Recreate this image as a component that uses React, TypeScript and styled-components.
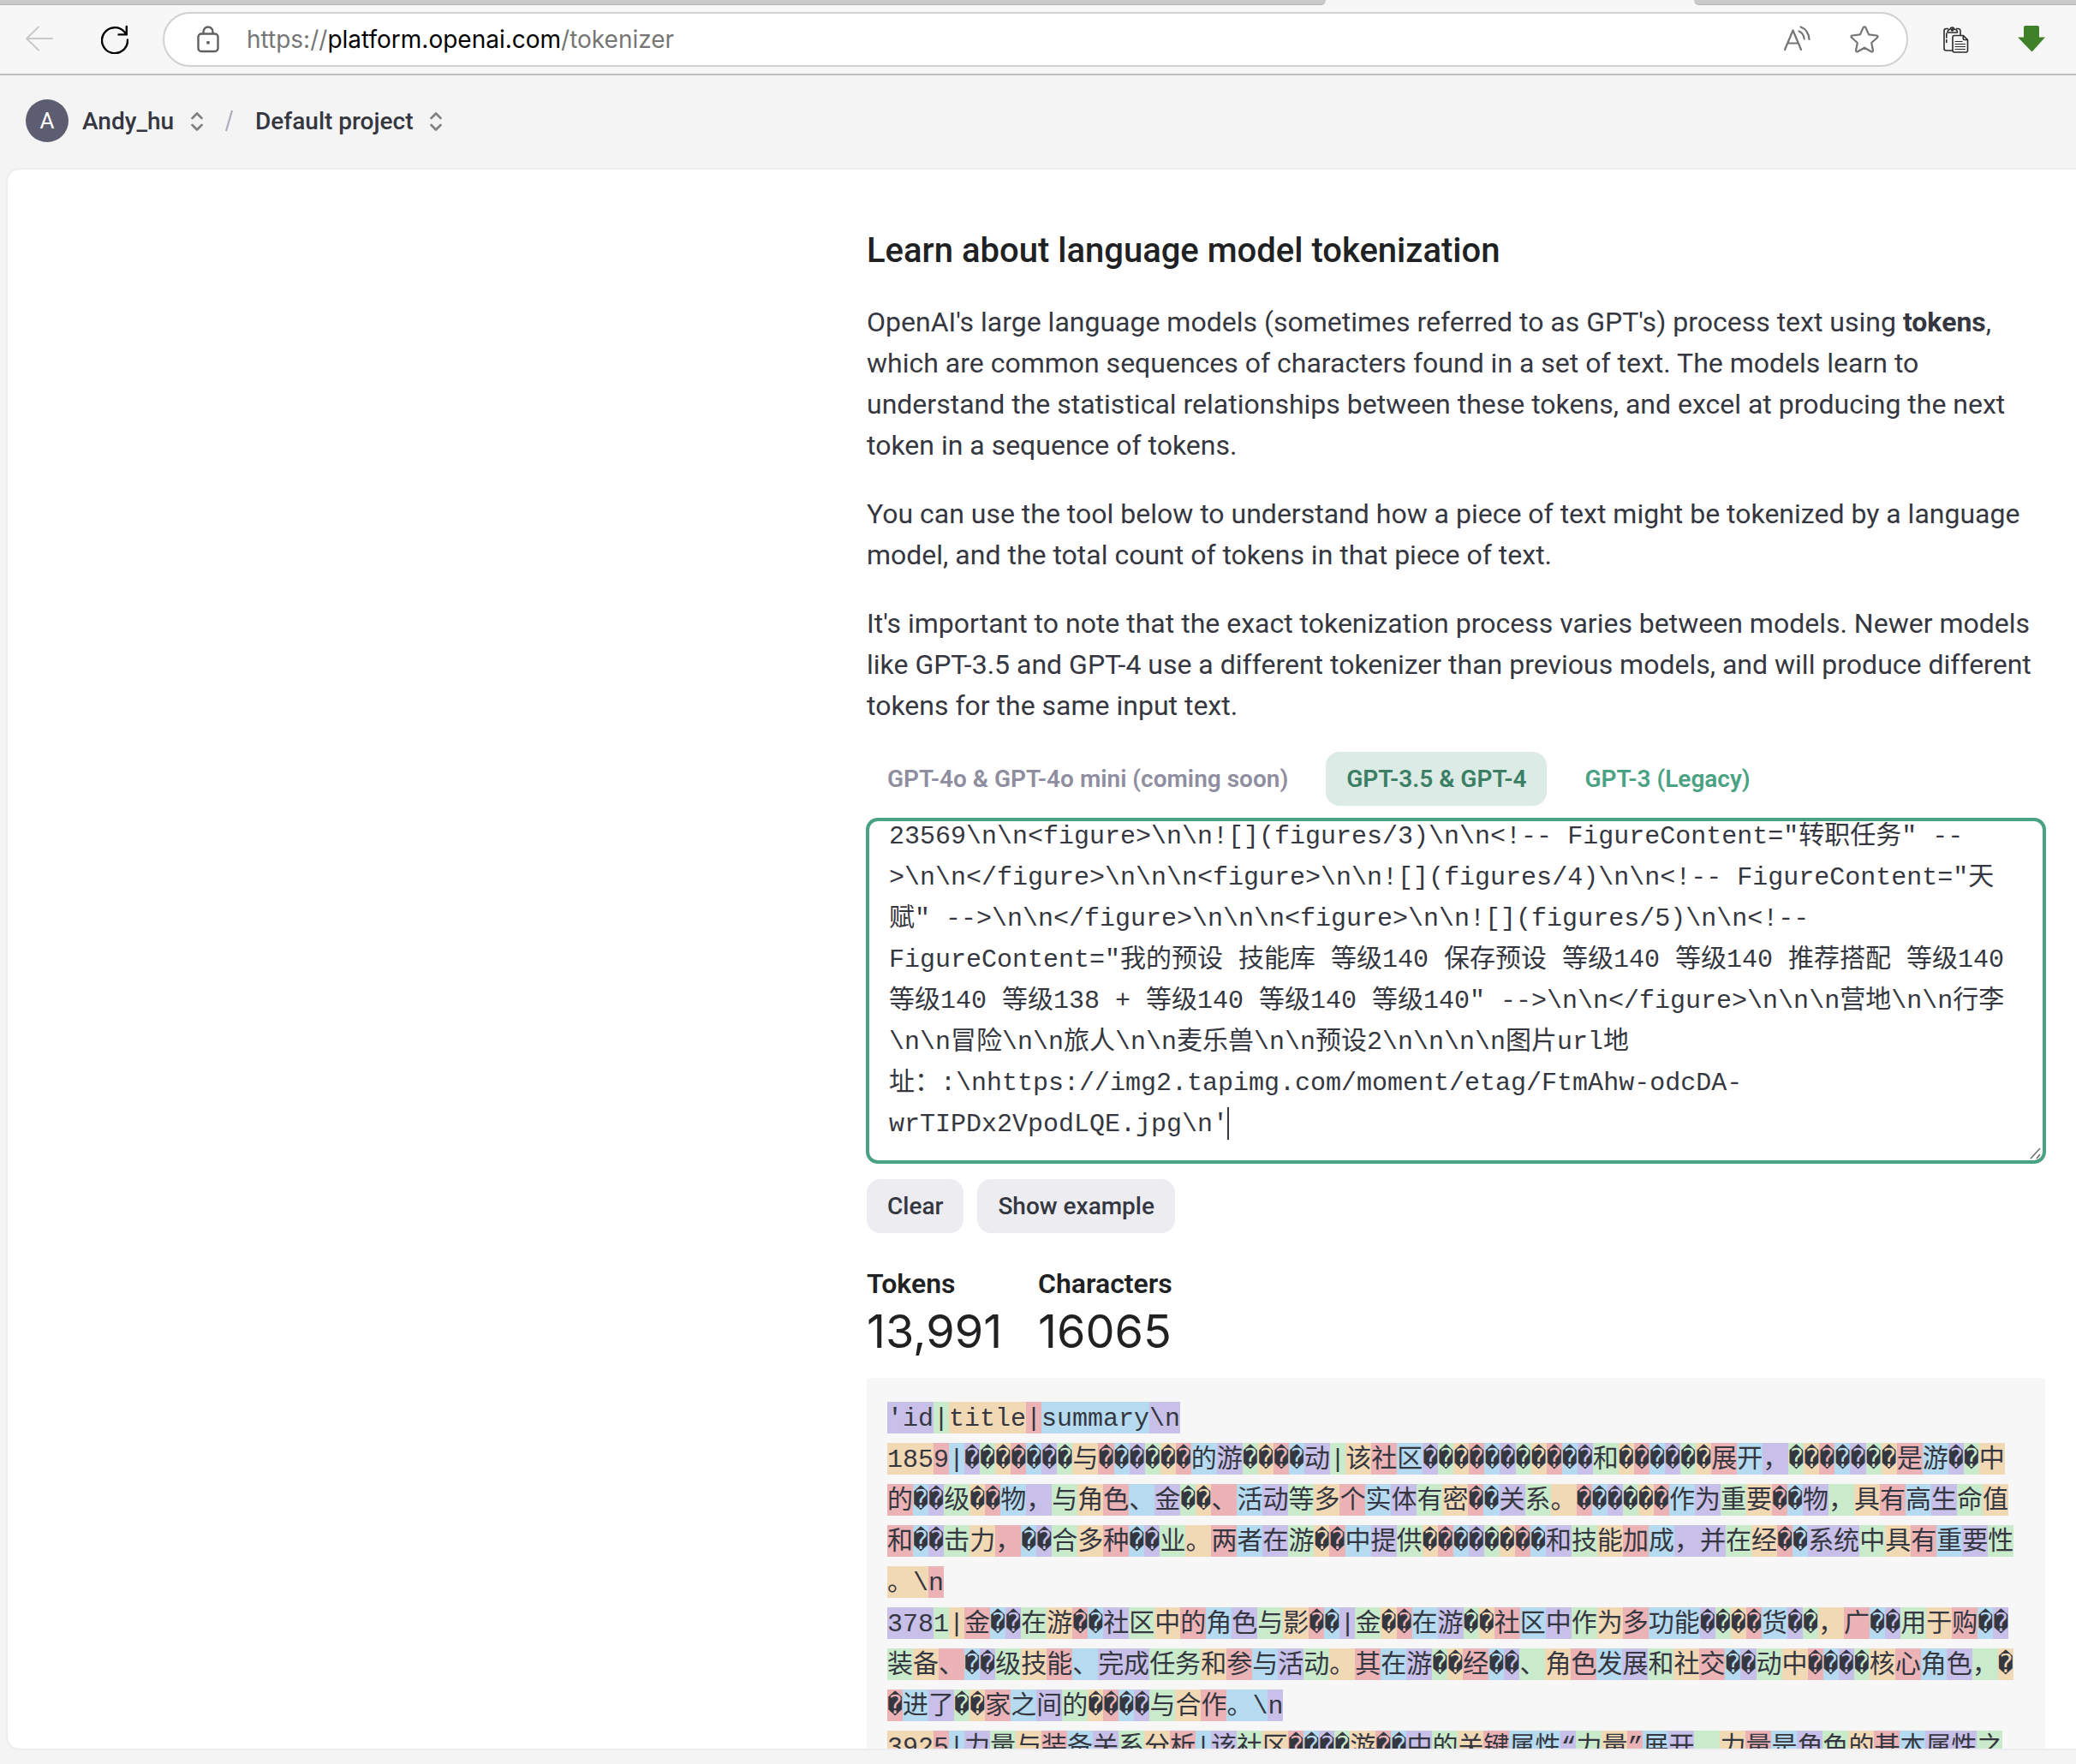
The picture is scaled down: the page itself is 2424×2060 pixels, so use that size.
import React, { useEffect, useRef, useState } from "react";
import styled, { createGlobalStyle } from "styled-components";

const sans = `Roboto, "Liberation Sans", sans-serif`;
const mono = `"Liberation Mono", "DejaVu Sans Mono", "Noto Sans CJK SC", monospace`;

const GlobalStyle = createGlobalStyle`
  *, *::before, *::after { box-sizing: border-box; }
  body { margin: 0; background: #f4f4f4; font-family: ${sans}; color: #353740; }
  button, textarea { font: inherit; color: inherit; }
`;

const Page = styled.div`
  display: flex;
  flex-direction: column;
  height: 100vh;
  overflow: hidden;
`;

/* Browser chrome */

const TabStrip = styled.div`
  flex: none;
  display: grid;
  grid-template-columns: 1548fr 430fr 446fr;
  height: 6px;
  background: #f7f7f7;
`;

const InactiveTabs = styled.div<{ $side: "left" | "right" }>`
  grid-column: ${(p) => (p.$side === "left" ? 1 : 3)};
  background: #cacaca;
  border-bottom: 1px solid #b4b4b4;
  border-radius: ${(p) => (p.$side === "left" ? "0 0 8px 0" : "0 0 0 8px")};
`;

const Toolbar = styled.div`
  flex: none;
  display: flex;
  align-items: center;
  height: 82px;
  padding: 0 36px 0 30px;
  background: #f7f7f7;
  border-bottom: 2px solid #bfbfbf;
`;

const IconButton = styled.button`
  flex: none;
  display: flex;
  padding: 0;
  border: 0;
  background: none;
`;

const NavButtons = styled.div`
  display: flex;
  gap: 56px;
`;

const AddressBar = styled.div`
  flex: 1;
  display: flex;
  align-items: center;
  height: 64px;
  margin: 0 40px;
  padding: 0 32px 0 38px;
  background: #fff;
  border: 2px solid #d1d1d1;
  border-radius: 32px;
`;

const Url = styled.div`
  flex: 1;
  margin-left: 32px;
  font-family: Inter, sans-serif;
  font-size: 28px;
  line-height: 36px;
  color: #767676;
`;

const Host = styled.span`
  color: #000;
`;

const BarActions = styled.div`
  display: flex;
  gap: 46px;
`;

/* Site header */

const Header = styled.header`
  flex: none;
  display: flex;
  align-items: center;
  height: 108px;
  padding: 0 30px 2px;
`;

const Avatar = styled.span`
  display: grid;
  place-items: center;
  width: 50px;
  height: 50px;
  margin-right: 16px;
  border-radius: 50%;
  background: #5d5d72;
  color: #fff;
  font-size: 26px;
`;

const Switcher = styled.button`
  display: flex;
  align-items: center;
  gap: 20px;
  padding: 2px 0 0;
  border: 0;
  background: none;
  font-size: 28px;
  font-weight: 500;
  line-height: 36px;
`;

const Slash = styled.span`
  display: flex;
  margin: 0 26px;
`;

/* Content */

const Panel = styled.main`
  flex: 1;
  min-height: 0;
  display: flex;
  justify-content: flex-end;
  align-items: flex-start;
  margin: 0 0 16px 7px;
  padding: 70px 36px 0;
  overflow: hidden;
  background: #fff;
  border: 2px solid #ececf1;
  border-right: 0;
  border-radius: 16px 0 0 16px;
`;

const Column = styled.div`
  flex: 0 1 1376px;
  min-width: 0;
`;

const Title = styled.h1`
  margin: 0 0 34px;
  font-size: 40px;
  font-weight: 500;
  line-height: 50px;
  color: #202123;
`;

const Paragraph = styled.p`
  margin: 0 0 32px;
  font-size: 32px;
  line-height: 48px;

  &:last-of-type {
    margin-bottom: 30px;
  }
`;

const Tabs = styled.div`
  display: flex;
  gap: 20px;
  margin-bottom: 14px;
`;

const Tab = styled.button<{ $state: "active" | "idle" | "disabled" }>`
  height: 63px;
  padding: 0 24px;
  border: 0;
  border-radius: 16px;
  font-size: 28px;
  font-weight: 600;
  background: ${(p) => (p.$state === "active" ? "#dcebe5" : "transparent")};
  color: ${(p) =>
    p.$state === "active" ? "#3c7f65" : p.$state === "disabled" ? "#8e8ea0" : "#4aa283"};
`;

const EditorFrame = styled.div`
  position: relative;
  display: flex;
  margin: 0 -1px 18px;
`;

const Editor = styled.textarea`
  width: 100%;
  height: 404px;
  padding: 20px 34px 18px 23px;
  border: 4px solid #4aa283;
  border-radius: 14px;
  outline: none;
  overflow: hidden;
  resize: none;
  background: #fff;
  caret-color: transparent;
  font-family: ${mono};
  font-size: 30px;
  line-height: 48px;
`;

const Caret = styled.span`
  position: absolute;
  left: 422px;
  top: 338px;
  width: 2px;
  height: 38px;
  background: #353740;
`;

const ResizeGrip = styled.svg`
  position: absolute;
  right: 5px;
  bottom: 5px;
`;

const Actions = styled.div`
  display: flex;
  gap: 16px;
  margin-bottom: 35px;
`;

const Button = styled.button`
  height: 63px;
  padding: 0 24px;
  border: 0;
  border-radius: 16px;
  background: #ececf1;
  font-size: 28px;
  font-weight: 500;
`;

const Stats = styled.dl`
  display: grid;
  grid-template-columns: 200px auto;
  justify-content: start;
  margin: 0 0 22px;
  color: #202123;
`;

const Stat = styled.div`
  display: flex;
  flex-direction: column;
`;

const StatLabel = styled.dt`
  font-size: 32px;
  font-weight: 600;
  line-height: 48px;
`;

const StatValue = styled.dd`
  margin: 0;
  font-family: Inter, ${sans};
  font-size: 54px;
  line-height: 64px;
`;

const Output = styled.div`
  padding: 24px;
  background: #f7f7f8;
  font-family: ${mono};
  font-size: 30px;
  line-height: 48px;
  white-space: pre-wrap;
  line-break: anywhere;
  word-break: break-all;
`;

const tints = ["#c9c0ea", "#caebcb", "#f2d9b6", "#ebb3b5", "#b6dbf1"];

const Token = styled.span<{ $tint: number }>`
  padding: 3px 0 0;
  background: ${(p) => tints[p.$tint]};
`;

/* Each entry is one source line; tokens are separated by spaces. */
const tokenLines = [
  "'id | title | summary \\n",
  "185 9 | � � � � � � � 与 � � � � � � 的 游 � � � � 动 | 该 社 区 � � � � � � � � � � � 和 � � � � � � 展 开 ， � � � � � � � 是 游 � � 中 " +
    "的 � � 级 � � 物 ， 与 角 色 、 金 � � 、 活 动 等 多 个 实 体 有 密 � � 关 系 。 � � � � � � 作 为 重 要 � � 物 ， 具 有 高 生 命 值 " +
    "和 � � 击 力 ， � � 合 多 种 � � 业 。 两 者 在 游 � � 中 提 供 � � � � � � � � 和 技 能 加 成 ，并 在 经 � � 系统 中 具 有 重 要 性 。\\ n",
  "378 1 | 金 � � 在 游 � � 社 区 中 的 角 色 与 影 � � | 金 � � 在 游 � � 社 区 中 作 为 多 功能 � � � � 货 � � ， 广 � � 用 于 购 � � " +
    "装 备 、 � � 级 技 能 、 完成 任务 和 参 与 活 动 。 其 在 游 � � 经 � � 、 角 色 发 展 和 社 交 � � 动 中 � � � � 核 心 角 色 ， � " +
    "� 进 了 � � 家 之 间 的 � � � � 与 合 作 。\\ n",
  "392 5 | 力 量 与 装 备 关 系 分 析 | 该 社 区 � � � � 游 � � 中 的 关 键 属性 “ 力 量 ” 展 开 ， 力 量 是 角 色 的 基 本 属性 之",
].map((line) => line.split(" "));

const sample =
  '23569\\n\\n<figure>\\n\\n![](figures/3)\\n\\n<!-- FigureContent="转职任务" -->\\n\\n</figure>\\n\\n\\n' +
  '<figure>\\n\\n![](figures/4)\\n\\n<!-- FigureContent="天赋" -->\\n\\n</figure>\\n\\n\\n' +
  '<figure>\\n\\n![](figures/5)\\n\\n<!-- FigureContent="我的预设 技能库 等级140 保存预设 等级140 等级140 推荐搭配 等级140 ' +
  '等级140 等级138 + 等级140 等级140 等级140" -->\\n\\n</figure>\\n\\n\\n营地\\n\\n行李\\n\\n冒险\\n\\n旅人\\n\\n麦乐兽\\n\\n预设2\\n\\n\\n\\n图片url地址：' +
  ":\\nhttps://img2.tapimg.com/moment/etag/FtmAhw-odcDA-wrTIPDx2VpodLQE.jpg\\n'";

function TokenOutput() {
  let index = 0;
  return (
    <Output>
      {tokenLines.map((tokens, row) => {
        const spans = tokens.map((text, i) => (
          <Token key={i} $tint={index++ % 5}>
            {text}
          </Token>
        ));
        index++; // the line break is a token of its own
        return <div key={row}>{spans}</div>;
      })}
    </Output>
  );
}

const UpDown = () => (
  <svg width="14" height="22" viewBox="0 0 14 22" fill="none" stroke="#808083" strokeWidth="2.6" strokeLinecap="round" strokeLinejoin="round" aria-hidden="true">
    <path d="M1.5 7 7 1.5 12.5 7M1.5 15 7 20.5 12.5 15" />
  </svg>
);

export default function App() {
  const editor = useRef<HTMLTextAreaElement>(null);
  const [text, setText] = useState(sample);

  useEffect(() => {
    const el = editor.current;
    if (!el) return;
    el.focus();
    el.setSelectionRange(el.value.length, el.value.length);
    el.scrollTop = el.scrollHeight;
  }, []);

  return (
    <>
      <GlobalStyle />
      <Page>
        <TabStrip>
          <InactiveTabs $side="left" />
          <InactiveTabs $side="right" />
        </TabStrip>
        <Toolbar>
          <NavButtons>
            <IconButton aria-label="Back" disabled>
              <svg width="32" height="32" viewBox="0 0 32 32" fill="none" stroke="#c9c9c9" strokeWidth="2" strokeLinecap="round" strokeLinejoin="round">
                <path d="M31 16H1M15 2.500 1 16l14 13.500" />
              </svg>
            </IconButton>
            <IconButton aria-label="Reload">
              <svg width="32" height="34" viewBox="0 0 32 34" fill="none" stroke="#000" strokeWidth="2.400" strokeLinecap="round" strokeLinejoin="round">
                <path d="M31 17.500A15 15 0 1 1 27.500 8.500L29.500 11M29.800 2v9.400H20.500" />
              </svg>
            </IconButton>
          </NavButtons>
          <AddressBar>
            <svg width="26" height="32" viewBox="0 0 26 32" fill="none" stroke="#616161" strokeWidth="2.400" aria-hidden="true">
              <rect x="1.500" y="9.500" width="23" height="20.500" rx="3.500" />
              <path d="M7.500 9.500V7a5.500 5.500 0 0 1 11 0v2.500" />
              <circle cx="13" cy="19.800" r="2" fill="#616161" stroke="none" />
            </svg>
            <Url>
              https://<Host>platform.openai.com</Host>/tokenizer
            </Url>
            <BarActions>
              <IconButton aria-label="Read aloud">
                <svg width="32" height="32" viewBox="0 0 32 32" fill="none" stroke="#757575" strokeWidth="2.200" strokeLinecap="round" strokeLinejoin="round">
                  <path d="M2 28 11.500 5.500 21 28M5.500 20.500h12" />
                  <path d="M18.500 6.500c3.500 1.500 5.800 4.800 6.200 9M20.500 1.500c5.500 2 9.500 7.500 10 14.500" />
                </svg>
              </IconButton>
              <IconButton aria-label="Add to favorites">
                <svg width="34" height="32" viewBox="0 0 34 32" fill="none" stroke="#757575" strokeWidth="2.200" strokeLinejoin="round">
                  <path d="M15.600 2.200q1.400-1.900 2.800 0l3.700 8.200 9.200 1.100q2 .6.800 2.300l-6.900 6.200 1.800 9q-.1 2-2.100 1.300L17 25.700l-7.900 4.600q-2 .7-2.100-1.300l1.800-9-6.900-6.200Q.700 12.100 2.700 11.500l9.200-1.100z" />
                </svg>
              </IconButton>
            </BarActions>
          </AddressBar>
          <NavButtons>
            <IconButton aria-label="Paste">
              <svg width="32" height="32" viewBox="0 0 32 32" fill="none" stroke="#2c2c2c" strokeWidth="1.600" strokeLinejoin="round" strokeLinecap="round">
                <path d="M11.500 29H4.500a2.500 2.500 0 0 1-2.500-2.500V6a2.500 2.500 0 0 1 2.500-2.500h2M16.500 3.500h2A2.500 2.500 0 0 1 21 6v4.500M4.800 9v5M4.800 16.500v3" />
                <path d="M6 8c0-2.500 1-3.500 3-3.700C9.300 2.600 10.200 2 11.500 2s2.200.6 2.500 2.300c2 .2 3.500 1.200 3.500 3.700z" fill="#f7f7f7" />
                <circle cx="11.600" cy="4.900" r="1" fill="#2c2c2c" />
                <path d="M14 11.500h10.500l5 5V29a2 2 0 0 1-2 2H14a2 2 0 0 1-2-2V13.500a2 2 0 0 1 2-2z" fill="#f7f7f7" />
                <path d="M24.300 11.800V15a1.500 1.500 0 0 0 1.500 1.500h3.400" />
                <path d="M15 18.500h8M15 21.500h11.500M15 24.500h11.500M15 27.500h11.500" strokeWidth="1.200" />
              </svg>
            </IconButton>
            <IconButton aria-label="Downloads">
              <svg width="32" height="32" viewBox="0 0 32 32" fill="#3f8128">
                <path d="M9 0h14q2 0 2 2v11.500H32L17.500 29.500q-1 1-2 0L0 13.500h7V2q0-2 2-2z" />
              </svg>
            </IconButton>
          </NavButtons>
        </Toolbar>

        <Header>
          <Avatar>A</Avatar>
          <Switcher>
            Andy_hu <UpDown />
          </Switcher>
          <Slash>
            <svg width="9" height="26" viewBox="0 0 9 26" stroke="#acacbe" strokeWidth="2.200" aria-hidden="true">
              <path d="M1 25 8 1" />
            </svg>
          </Slash>
          <Switcher>
            Default project <UpDown />
          </Switcher>
        </Header>

        <Panel>
          <Column>
            <Title>Learn about language model tokenization</Title>
            <Paragraph>
              OpenAI's large language models (sometimes referred to as GPT's) process text using{" "}
              <strong>tokens</strong>, which are common sequences of characters found in a set of text.
              The models learn to understand the statistical relationships between these tokens, and
              excel at producing the next token in a sequence of tokens.
            </Paragraph>
            <Paragraph>
              You can use the tool below to understand how a piece of text might be tokenized by a
              language model, and the total count of tokens in that piece of text.
            </Paragraph>
            <Paragraph>
              It's important to note that the exact tokenization process varies between models. Newer
              models like GPT-3.5 and GPT-4 use a different tokenizer than previous models, and will
              produce different tokens for the same input text.
            </Paragraph>
            <Tabs>
              <Tab $state="disabled" disabled>
                GPT-4o &amp; GPT-4o mini (coming soon)
              </Tab>
              <Tab $state="active">GPT-3.5 &amp; GPT-4</Tab>
              <Tab $state="idle">GPT-3 (Legacy)</Tab>
            </Tabs>
            <EditorFrame>
              <Editor
                ref={editor}
                aria-label="Text to tokenize"
                spellCheck={false}
                value={text}
                onChange={(e) => setText(e.target.value)}
              />
              {text === sample && <Caret />}
              <ResizeGrip width="14" height="14" viewBox="0 0 14 14" stroke="#6b6b6b" strokeWidth="1.500" aria-hidden="true">
                <path d="M1 13 12 1M8 13l4-5" />
              </ResizeGrip>
            </EditorFrame>
            <Actions>
              <Button onClick={() => setText("")}>Clear</Button>
              <Button onClick={() => setText(sample)}>Show example</Button>
            </Actions>
            <Stats>
              <Stat>
                <StatLabel>Tokens</StatLabel>
                <StatValue>13,991</StatValue>
              </Stat>
              <Stat>
                <StatLabel>Characters</StatLabel>
                <StatValue>16065</StatValue>
              </Stat>
            </Stats>
            <TokenOutput />
          </Column>
        </Panel>
      </Page>
    </>
  );
}
